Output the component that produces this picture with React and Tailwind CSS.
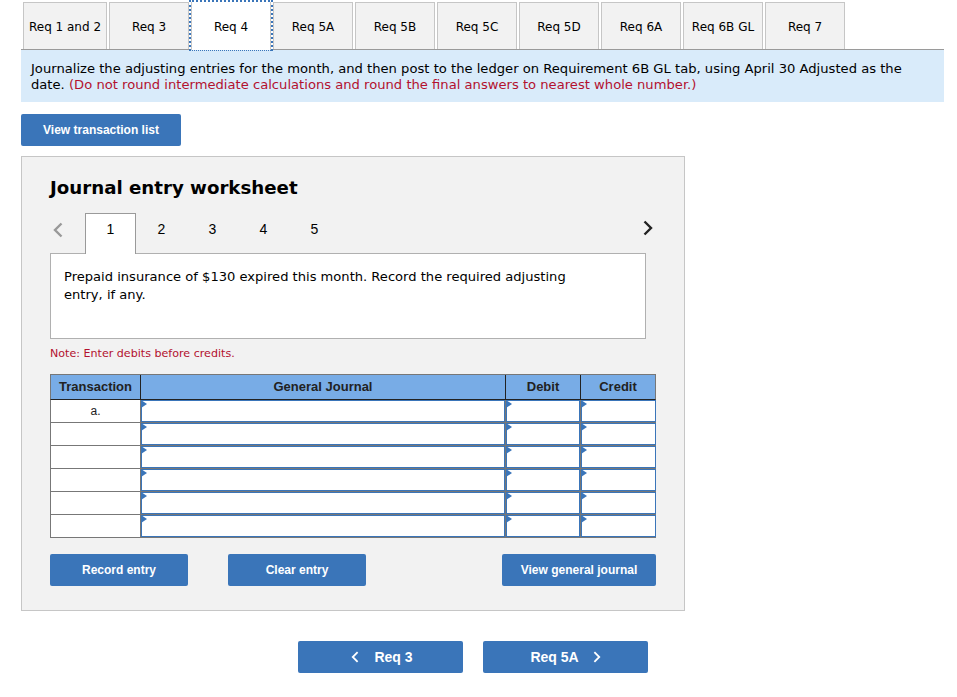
import React from "react";

const verdana = "font-['DejaVu_Sans',sans-serif]";
const arial = "font-['Liberation_Sans',Arial,sans-serif]";

const tabs = [
	{ label: "Req 1 and 2", width: "w-[84px]" },
	{ label: "Req 3", width: "w-[80px]" },
	{ label: "Req 4", width: "w-[84px]", active: true },
	{ label: "Req 5A", width: "w-[80px]" },
	{ label: "Req 5B", width: "w-[80px]" },
	{ label: "Req 5C", width: "w-[80px]" },
	{ label: "Req 5D", width: "w-[80px]" },
	{ label: "Req 6A", width: "w-[80px]" },
	{ label: "Req 6B GL", width: "w-[80px]" },
	{ label: "Req 7", width: "w-[80px]" },
];

const rows = ["a.", "", "", "", "", ""];

function Chevron({ left, className = "" }) {
	return (
		<svg viewBox="0 0 10 16" fill="none" stroke="currentColor" strokeWidth="2.4" className={className}>
			<polyline points={left ? "8.5,1.5 2,8 8.5,14.5" : "1.5,1.5 8,8 1.5,14.5"} />
		</svg>
	);
}

function Button({ children, className = "" }) {
	return (
		<button className={`flex h-8 items-center justify-center rounded-[2px] bg-[#3a75b9] font-bold text-white ${arial} ${className}`}>
			{children}
		</button>
	);
}

function EntryCell({ width }) {
	return (
		<div className={`relative h-[22px] border border-[#3a75b9] bg-white ${width}`}>
			<span className="absolute left-[-1px] top-[-1px] h-0 w-0 border-y-[4px] border-l-[6px] border-y-transparent border-l-[#3a75b9]" />
		</div>
	);
}

function App() {
	return (
		<div className={`h-[697px] w-[957px] overflow-hidden bg-white pt-[2px] pl-[21px] ${verdana}`}>
			<div className="flex h-[48px] w-[923px] items-stretch gap-[2px] border-b border-[#9a9a9a] pl-[2px]">
				{tabs.map((tab) =>
					tab.active ? (
						<div
							key={tab.label}
							className={`relative z-10 mx-[-2px] mb-[-2px] mt-[-2px] border-x-2 border-t-2 border-b border-dotted border-[#3a75b9] ${tab.width}`}
						>
							<div className="flex h-full items-center justify-center border-x border-[#c6c6c6] bg-white pt-[1px] text-xs text-black">
								{tab.label}
							</div>
						</div>
					) : (
						<div
							key={tab.label}
							className={`flex items-center justify-center border border-b-0 border-[#c6c6c6] bg-[#f2f2f2] pt-[2px] text-xs text-black ${tab.width}`}
						>
							{tab.label}
						</div>
					),
				)}
			</div>

			<div className="h-[52px] w-[923px] bg-[#d9ebfa] px-[10px] pt-[11px] text-[13.13px] leading-4 text-black">
				Journalize the adjusting entries for the month, and then post to the ledger on Requirement 6B GL tab, using April 30 Adjusted as the
				<br />
				date. <span className="text-[#b3112f]">(Do not round intermediate calculations and round the final answers to nearest whole number.)</span>
			</div>

			<Button className="mt-3 w-[160px] text-xs">View transaction list</Button>

			<div className="mt-[10px] h-[455px] w-[664px] border border-[#c6c6c6] bg-[#f2f2f2] pl-[28px] pt-[19px]">
				<h2 className="text-[18.2px] font-bold leading-[24px] text-black">Journal entry worksheet</h2>

				<div className={`relative mt-[13px] flex h-[41px] w-[596px] items-center ${arial}`}>
					<Chevron left className="mb-[8px] ml-[3px] h-[16px] w-[10px] text-[#999999]" />
					<div className="z-10 ml-[22px] flex h-[41px] w-[51px] items-center justify-center border border-b-0 border-[#9a9a9a] bg-white pb-[10px] text-sm text-black">1</div>
					{[2, 3, 4, 5].map((n) => (
						<div key={n} className="flex h-[41px] w-[51px] items-center justify-center pb-[10px] text-sm text-black">{n}</div>
					))}
					<Chevron className="absolute right-[-7px] top-[7px] h-[16px] w-[10px] text-[#222222]" />
				</div>

				<div className="mt-[-1px] h-[86px] w-[596px] border border-[#b0b0b0] bg-white px-[13px] pt-[14px] text-[13.08px] leading-[18px] text-black">
					Prepaid insurance of $130 expired this month. Record the required adjusting
					<br />
					entry, if any.
				</div>

				<p className="mt-[7px] text-[11.1px] leading-4 text-[#b3112f]">Note: Enter debits before credits.</p>

				<div className={`mt-[12px] w-[606px] ${arial}`}>
					<div className="flex h-[26px] border border-[#777777] border-b-[#222222] bg-[#78ace6] text-[13px] font-bold text-[#222222]">
						<div className="flex w-[90px] items-center justify-center border-r border-[#222222]">Transaction</div>
						<div className="flex w-[365px] items-center justify-center border-r border-[#222222]">General Journal</div>
						<div className="flex w-[75px] items-center justify-center border-r border-[#222222]">Debit</div>
						<div className="flex flex-1 items-center justify-center">Credit</div>
					</div>
					{rows.map((row, i) => (
						<div key={i} className="flex h-[23px] gap-[1px] bg-[#777777]">
							<div className="flex h-[22px] w-[90px] items-center justify-center border-l border-[#777777] bg-white text-xs text-[#222222]">{row}</div>
							<EntryCell width="w-[364px]" />
							<EntryCell width="w-[74px]" />
							<EntryCell width="w-[75px]" />
						</div>
					))}
				</div>

				<div className="mt-[16px] flex w-[606px]">
					<Button className="w-[138px] text-xs">Record entry</Button>
					<Button className="ml-[40px] w-[138px] text-xs">Clear entry</Button>
					<Button className="ml-auto w-[154px] text-xs">View general journal</Button>
				</div>
			</div>

			<div className="ml-[277px] mt-[30px] flex gap-5">
				<Button className="w-[165px] gap-[15px] pl-[3px] text-sm">
					<Chevron left className="h-[12px] w-[8px]" />
					Req 3
				</Button>
				<Button className="w-[165px] gap-[14px] text-sm">
					Req 5A
					<Chevron className="h-[12px] w-[8px]" />
				</Button>
			</div>
		</div>
	);
}

export default App;
